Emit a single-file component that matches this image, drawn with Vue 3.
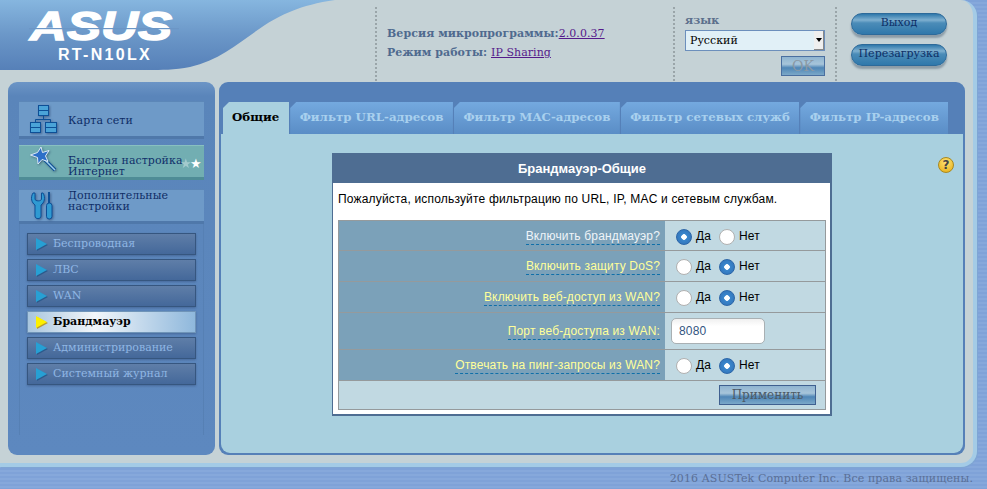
<script setup>
const tabs = ['Фильтр URL-адресов', 'Фильтр MAC-адресов', 'Фильтр сетевых служб', 'Фильтр IP-адресов']
const sub = [
  { t: 'Беспроводная' }, { t: 'ЛВС' }, { t: 'WAN' }, { t: 'Брандмауэр', on: true },
  { t: 'Администрирование' }, { t: 'Системный журнал' }
]
const rows = [
  { q: 'Включить брандмауэр?', v: 'yes', white: true },
  { q: 'Включить защиту DoS?', v: 'no' },
  { q: 'Включить веб-доступ из WAN?', v: 'no' },
  { q: 'Порт веб-доступа из WAN:', input: '8080' },
  { q: 'Отвечать на пинг-запросы из WAN?', v: 'no' }
]
</script>

<template>
  <div class="page">
    <div class="frame">
      <header class="head">
        <svg class="curve" width="340" height="70" viewBox="0 0 340 70">
          <defs>
            <linearGradient id="hg" x1="0" y1="0" x2="0" y2="1">
              <stop offset="0" stop-color="#86b6df" />
              <stop offset="0.5" stop-color="#6b97c8" />
              <stop offset="1" stop-color="#5680b8" />
            </linearGradient>
          </defs>
          <path d="M0 0H335C300 5 280 15 262 27C240 42 220 60 190 67C175 70 160 70 150 70H0Z" fill="url(#hg)" />
        </svg>
        <div class="brand">
          <svg class="logo" width="150" height="33" viewBox="0 0 150 33">
            <text x="1" y="31" textLength="142" lengthAdjust="spacingAndGlyphs" class="logotext">ASUS</text>
            <rect x="0" y="19" width="150" height="1.200" fill="#6c96c6" />
          </svg>
          <div class="model">RT-N10LX</div>
        </div>
        <div class="info sep">
          <div>Версия микропрограммы:<a class="lnk">2.0.0.37</a></div>
          <div>Режим работы: <a class="lnk">IP Sharing</a></div>
        </div>
        <div class="lang sep">
          <div class="langt">язык</div>
          <div class="sel"><span>Русский</span><i class="arrow"></i></div>
          <button class="ok">OK</button>
        </div>
        <div class="acts sep">
          <button class="pill">Выход</button>
          <button class="pill">Перезагрузка</button>
        </div>
      </header>

      <div class="body">
        <aside class="side">
          <div class="bigs">
            <div class="big map">
              <svg width="30" height="30" viewBox="0 0 30 30" class="ic">
                <g fill="#4aa3d8" stroke="#0d4f96" stroke-width="1">
                  <rect x="8.500" y="1.500" width="10" height="10" />
                  <rect x="0.500" y="18.500" width="10" height="10" />
                  <rect x="15.500" y="18.500" width="11" height="10" />
                </g>
                <path d="M0.500 23.500H10.500M15.500 23.500H26.500M8.500 6.500H18.500M13.500 11.500V15.500M5.500 18.500V15.500H20.500V18.500" fill="none" stroke="#0d4f96" />
              </svg>
              <span>Карта сети</span>
            </div>
            <div class="big quick">
              <svg width="30" height="30" viewBox="0 0 30 30" class="ic">
                <path d="M13 11L25 23" stroke="#0d4f96" stroke-width="3.500" />
                <path d="M13 11L25 23" stroke="#9fd0ee" stroke-width="1.500" />
                <path d="M11 0L12.500 5.500L19 3.500L15.500 9L18 14.500L12 12.500L8 17L7.500 10.500L0.500 8L7.500 5.500Z" fill="#2d6fc8" stroke="#dceaf8" stroke-width="1" />
              </svg>
              <span>Быстрая настройка<br />Интернет</span>
              <b class="star dim">★</b><b class="star">★</b>
            </div>
            <div class="big adv">
              <svg width="30" height="30" viewBox="0 0 30 30" class="ic">
                <path d="M3 2C0 7 2 12 5 14V25C5 28.500 11 28.500 11 25V14C14 12 16 7 13 2L11.500 2V8C11.500 10.500 5 10.500 5 8V2Z" fill="#2f9ad2" stroke="#0d4f96" />
                <rect x="18" y="1" width="2" height="12" fill="#0d4f96" />
                <rect x="16.500" y="12" width="5.500" height="16" rx="2.700" fill="#2f9ad2" stroke="#0d4f96" />
              </svg>
              <span>Дополнительные<br />настройки</span>
            </div>
          </div>
          <nav class="subs">
            <div v-for="s in sub" :key="s.t" class="subi" :class="{ on: s.on }">
              <i class="tri"></i><span>{{ s.t }}</span>
            </div>
          </nav>
        </aside>

        <main class="main">
          <div class="tabs">
            <div class="tab act">Общие</div>
            <div v-for="t in tabs" :key="t" class="tab">{{ t }}</div>
          </div>
          <section class="content">
            <div class="card">
              <div class="cardh">Брандмауэр-Общие</div>
              <div class="desc">Пожалуйста, используйте фильтрацию по URL, IP, MAC и сетевым службам.</div>
              <div class="table">
                <div v-for="r in rows" :key="r.q" class="row" :class="{ tall: r.input }">
                  <div class="lab"><span :class="{ w: r.white }">{{ r.q }}</span></div>
                  <div class="val">
                    <template v-if="r.input">
                      <div class="inp">{{ r.input }}</div>
                    </template>
                    <template v-else>
                      <i class="rad" :class="{ sel2: r.v === 'yes' }"></i><span class="opt">Да</span>
                      <i class="rad" :class="{ sel2: r.v === 'no' }"></i><span class="opt">Нет</span>
                    </template>
                  </div>
                </div>
                <div class="apply"><button class="ap">Применить</button></div>
              </div>
            </div>
            <div class="help">?</div>
          </section>
        </main>
      </div>
    </div>
    <footer class="foot">2016 ASUSTek Computer Inc. Все права защищены.</footer>
  </div>
</template>

<style>
html, body { margin: 0; padding: 0; }
</style>

<style scoped>
.page {
  width: 987px; height: 489px; overflow: hidden; position: relative;
  background: repeating-linear-gradient(180deg, #7fa2d8 0 2px, #86a8db 2px 4px);
  font-family: "DejaVu Serif", serif;
}
.frame {
  width: 977px; height: 467px; box-sizing: border-box; background: #c5d2d6;
  border-right: 4px solid #a4cbe6; border-bottom: 4px solid #a4cbe6;
  box-shadow: 1px 1px 0 #7fa5d4; border-bottom-right-radius: 16px; border-top-right-radius: 16px;
  position: relative;
}
.head { height: 82px; display: flex; position: relative; box-sizing: border-box; }
.curve { position: absolute; left: 0; top: 0; }
.brand { position: relative; width: 375px; box-sizing: border-box; padding: 9px 0 0 29px; }
.logo { display: block; overflow: visible; }
.logotext { font: italic 700 41px "Liberation Sans", sans-serif; fill: #fff; stroke: #fff; stroke-width: 1.400px; }
.model {
  font: 700 16px "Liberation Sans", sans-serif; color: #fff; letter-spacing: 2.300px;
  margin: 4px 0 0 29px;
}
.sep { position: relative; }
.sep::before {
  content: ""; position: absolute; left: 0; top: 7px; bottom: 1px;
  border-left: 2px dotted #9aa5a9;
}
.info {
  width: 298px; box-sizing: border-box; padding: 24px 0 0 12px;
  font-size: 11px; font-weight: 700; color: #4f6a8f; line-height: 19px; letter-spacing: 0.060px;
}
.lnk { font-weight: 400; color: #551a8b; text-decoration: underline; }
.lang { width: 162px; box-sizing: border-box; padding: 14px 0 0 12px; }
.langt { font-size: 11px; font-weight: 700; color: #5c6f8c; line-height: 13px; }
.sel {
  margin-top: 3px; width: 140px; height: 21px; box-sizing: border-box; border: 1px solid #6c8fbc;
  background: #e1f0f7; font-size: 11px; line-height: 19px; padding-left: 4px; position: relative; color: #000;
}
.arrow {
  position: absolute; right: 0; top: 0; width: 10px; height: 19px; background: #efefef;
  border-right: 1px solid #888; border-bottom: 1px solid #888; box-sizing: border-box;
}
.arrow::after {
  content: ""; position: absolute; left: 2px; top: 7px;
  border: 3px solid transparent; border-top: 4px solid #000; border-bottom: 0;
}
.ok {
  display: block; margin: 5px 0 0 96px; width: 44px; height: 20px; padding: 0; border: 1px solid #4a6fa0;
  background: linear-gradient(180deg, #8fb4d0, #a7c5da 40%, #4f86b6 60%, #7ba8c8);
  font: 14px "DejaVu Serif", serif; color: #8a98a4;
}
.acts { flex: 1; padding: 13px 0 0 16px; display: flex; flex-direction: column; gap: 9px; }
.pill {
  width: 96px; height: 22px; padding: 0 0 4px; border: 1px solid #2d6a9a; border-radius: 11px;
  background: linear-gradient(180deg, #2f78ab, #7fb0d0 30%, #4b8cb8 45%, #2f78ab);
  font: 11px "DejaVu Serif", serif; color: #0d2f66;
  box-shadow: 0 3px 2px rgba(70, 90, 110, 0.450); white-space: nowrap;
}
.body { display: flex; gap: 4px; padding-left: 8px; }
.side {
  width: 207px; height: 373px; box-sizing: border-box; border-radius: 9px;
  background: linear-gradient(180deg, #6c95c6, #5a85ba 14px, #5d88bf);
  padding-top: 19px;
}
.bigs { display: flex; flex-direction: column; }
.big {
  margin: 0 0 0 11px; width: 185px; height: 35px; box-sizing: border-box; position: relative;
  background: #6e9ac8; border-top: 1px solid #5c87b8; border-bottom: 3px solid #4f78aa;
  display: flex; align-items: center; font-size: 11px; line-height: 11px; color: #0f2d66; letter-spacing: 0.050px;
}
.big.map { height: 38px; margin-bottom: 6px; }
.big.map span { padding-top: 2px; }
.big.quick { height: 35px; background: #72aeb2; border-color: #89c0c0 #000 #4f8c96; margin-bottom: 9px; color: #10306a; }
.big.quick span { padding-top: 9px; }
.big.adv { height: 35px; }
.big.adv span { padding-bottom: 10px; }
.ic { margin: 0 8px 0 11px; flex: none; filter: drop-shadow(1px 1px 1px rgba(30, 50, 90, 0.500)); }
.star { position: absolute; left: 171px; top: 12px; color: #fff; font-size: 13px; font-family: "DejaVu Sans", sans-serif; line-height: 12px; }
.star.dim { left: 161px; opacity: 0.350; }
.subs {
  margin: 0 0 0 11px; width: 185px; height: 211px; box-sizing: border-box;
  padding: 9px 0 0 7px; display: flex; flex-direction: column; gap: 4px;
  border-left: 1px solid #5680b4; border-right: 1px solid #5680b4;
}
.subi {
  width: 169px; height: 22px; box-sizing: border-box; border: 1px solid #36567f;
  background: linear-gradient(180deg, #5f7ea8, #44689a);
  box-shadow: 0 1px 2px rgba(40, 60, 100, 0.400);
  display: flex; align-items: center; font-size: 11px; color: #8fb6e4;
}
.subi span { padding-bottom: 2px; }
.subi.on {
  background: linear-gradient(90deg, #a9c6de, #f2f6fa 40%, #8fb8dc);
  border-color: #6f94b8; color: #000; font-weight: 700;
}
.tri {
  margin: 0 6px 0 8px; width: 0; height: 0; flex: none;
  border-left: 11px solid #27a0d4; border-top: 6px solid transparent; border-bottom: 6px solid transparent;
  filter: drop-shadow(1px 1px 0 #2c5a8c);
}
.on .tri { border-left-color: #fdf000; filter: drop-shadow(1px 1px 0 #b89a30); }
.main {
  width: 746px; height: 373px; box-sizing: border-box; border-radius: 9px; background: #5580b8;
  padding: 20px 2px 2px; display: flex; flex-direction: column;
}
.tabs { display: flex; gap: 1px; height: 32px; padding-left: 2px; }
.tab {
  box-sizing: border-box; padding: 0 9.500px; height: 32px; line-height: 31px; font-size: 11.800px; font-weight: 700;
  color: #a8d0ee; background: linear-gradient(180deg, #74a9df, #5a8dc6);
  clip-path: polygon(6px 0, 100% 0, 100% 100%, 0 100%, 0 6px);
  white-space: nowrap;
}
.tab.act { background: #a9d0df; color: #000; padding: 0 10px 0 9px; }
.content {
  flex: 1; background: #a9d0df; border-radius: 0 0 9px 9px; position: relative;
  padding: 19px 0 0 111px;
}
.card {
  width: 500px; background: #fff; box-sizing: border-box; border: 2px solid #4e6d92; border-top: 0;
  border-left-width: 1px; font-family: "Liberation Sans", sans-serif;
}
.cardh {
  height: 30px; margin: 0 -2px 0 -1px; background: #4e6d92; color: #fff; font-size: 13px; font-weight: 700;
  text-align: center; line-height: 32px;
}
.desc { height: 37px; padding: 9px 0 0 5px; box-sizing: border-box; font-size: 12px; line-height: 14px; color: #000; letter-spacing: 0.180px; }
.table { margin: 0 0 4px 5px; width: 488px; border: 1px solid #959a9c; box-sizing: border-box; }
.row { display: flex; height: 31px; border-bottom: 1px solid #959a9c; box-sizing: border-box; }
.row.tall { height: 37px; }
.row:first-child { height: 30px; }
.lab {
  width: 326px; background: #7ba1b9; box-sizing: border-box; text-align: right; padding: 8px 5px 0 0;
  font-size: 12px; line-height: 14px; color: #ffff99; letter-spacing: 0.160px;
}
.tall .lab { padding-top: 11px; }
.lab span { border-bottom: 1px dashed #0f6fa8; padding-bottom: 1px; }
.lab .w { color: #eef4f8; }
.val { flex: 1; background: #c1d9e2; display: flex; align-items: center; padding-left: 11px; font-size: 12px; color: #000; letter-spacing: 0.160px; }
.rad {
  width: 16px; height: 16px; border-radius: 50%; box-sizing: border-box; background: #fff;
  border: 1px solid #b0b0b0; flex: none; margin-top: 2px;
}
.rad.sel2 { background: radial-gradient(circle, #fff 0 2.500px, #3a86cc 3px, #2f6fb5 100%); border-color: #2c66a8; }
.opt { margin-left: 4px; width: 23px; }
.inp {
  margin-left: -5px; width: 94px; height: 26px; box-sizing: border-box; border: 1px solid #a9b0b3; border-radius: 5px;
  background: linear-gradient(180deg, #f0f0f0, #fff 30%); padding-left: 7px; line-height: 24px; color: #33557f; font-size: 12px;
}
.apply { height: 28px; background: #c1d9e2; display: flex; justify-content: flex-end; align-items: center; padding-right: 9px; }
.ap {
  width: 97px; height: 20px; padding: 0; border: 1px solid #3f6090;
  background: linear-gradient(180deg, #8fb4d0, #a7c5da 40%, #4f86b6 60%, #7ba8c8);
  font: 12px "DejaVu Serif", serif; color: #4d5a66;
}
.help {
  position: absolute; left: 717px; top: 23px; width: 16px; height: 16px; border-radius: 50%;
  background: radial-gradient(circle at 50% 30%, #ffe477, #e5ab10); border: 1px solid #a98920; box-sizing: border-box;
  font: 700 12px/14px "DejaVu Sans", sans-serif; color: #444; text-align: center;
}
.foot {
  position: absolute; right: 14px; bottom: 4px; font-size: 11px; color: #5a6f96; letter-spacing: 0.100px;
}
</style>
